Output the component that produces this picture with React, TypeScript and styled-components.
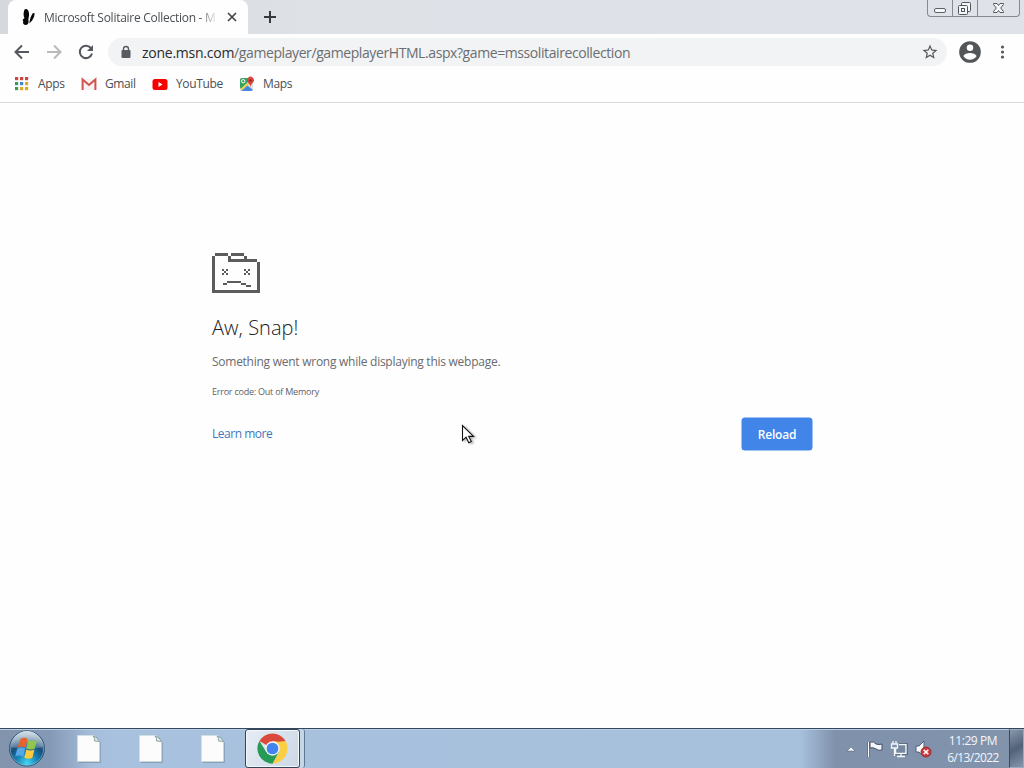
import type { ReactNode } from "react";
import styled, { createGlobalStyle } from "styled-components";

const GlobalStyle = createGlobalStyle`
  * {
    box-sizing: border-box;
  }
  body {
    margin: 0;
    overflow: hidden;
    font-family: "Open Sans", "Noto Sans", sans-serif;
  }
  svg {
    display: block;
    flex-shrink: 0;
  }
`;

const Desktop = styled.div`
  position: relative;
  display: flex;
  flex-direction: column;
  width: 1024px;
  height: 768px;
  background: #fefefe;
`;

const Label = styled.span<{ $size?: number; $spacing?: number; $color?: string }>`
  font-size: ${(props) => props.$size ?? 12}px;
  letter-spacing: ${(props) => props.$spacing ?? 0}px;
  color: ${(props) => props.$color ?? "#4b4f53"};
  white-space: nowrap;
`;

/* Tab strip */

const TabStrip = styled.div`
  display: flex;
  height: 34px;
  padding-left: 8px;
  background: linear-gradient(90deg, #d5d8dc, #dee1e6 30%, #dfe2e9);
`;

const Tab = styled.div`
  display: flex;
  align-items: center;
  width: 240px;
  padding: 0 10px 0 13px;
  background: #fefefe;
  border-radius: 8px 8px 0 0;
`;

const TabTitle = styled.div`
  width: 175px;
  margin-left: 8px;
  line-height: 20px;
  mask-image: linear-gradient(90deg, #000 155px, transparent 174px);
`;

const CloseTab = styled.div`
  margin-left: 8px;
`;

const NewTab = styled.div`
  display: flex;
  align-items: center;
  margin-left: 15px;
`;

const WindowButtons = styled.div`
  display: flex;
  width: 93px;
  height: 17px;
  margin: 0 4px 0 auto;
  border: 1px solid #858990;
  border-top: 0;
  border-radius: 0 0 4px 4px;
  background: #dfe2e8;
`;

const WindowButton = styled.div<{ $width: number }>`
  display: flex;
  justify-content: center;
  width: ${(props) => props.$width}px;
  & + & {
    border-left: 1px solid #858990;
  }
`;

/* Toolbar */

const Toolbar = styled.div`
  display: flex;
  align-items: center;
  height: 36px;
  padding-left: 14px;
`;

const NavButtons = styled.div`
  display: flex;
  gap: 16px;
  width: 94px;
`;

const AddressBar = styled.div`
  display: flex;
  align-items: center;
  width: 839px;
  height: 28px;
  padding: 0 8px 0 12px;
  border-radius: 14px;
  background: #f1f3f4;
`;

const Url = styled.div`
  flex: 1;
  margin-left: 10px;
  line-height: 20px;
`;

const ToolbarEnd = styled.div`
  display: flex;
  align-items: center;
  gap: 13px;
  margin-left: 10px;
`;

const Bookmarks = styled.div`
  display: flex;
  height: 33px;
  padding: 0 0 4px 13px;
  border-bottom: 1px solid #d9dadb;
`;

const Bookmark = styled.div<{ $width: number }>`
  display: flex;
  align-items: center;
  gap: 8px;
  width: ${(props) => props.$width}px;
  ${Label} {
    padding-bottom: 1px;
  }
`;

/* Crash page */

const Page = styled.main`
  flex: 1;
  padding: 150px 212px 0;
`;

const Heading = styled.h1`
  margin: 21px 0 0;
  font-size: 20px;
  line-height: 28px;
  font-weight: 300;
  letter-spacing: 0.05px;
  color: #202124;
`;

const Message = styled.p<{ $top: number }>`
  display: flex;
  align-items: center;
  height: 20px;
  margin: ${(props) => props.$top}px 0 0;
`;

const Actions = styled.div`
  display: flex;
  align-items: center;
  justify-content: space-between;
  width: 600px;
  height: 32px;
  margin-top: 17px;
  ${Label} {
    padding-bottom: 1px;
  }
`;

const ReloadButton = styled.button`
  width: 70px;
  height: 32px;
  padding: 0;
  border: 0;
  border-radius: 3px;
  background: #4285e8;
  box-shadow: 0 0 0 0.5px #4285e8;
  color: #fff;
  font-family: inherit;
  font-size: 12px;
  font-weight: 600;
  letter-spacing: -0.2px;
`;

const Cursor = styled.svg`
  position: absolute;
  left: 461px;
  top: 424px;
  filter: drop-shadow(2px 1px 1px rgba(0, 0, 0, 0.3));
`;

/* Taskbar */

const Taskbar = styled.footer`
  display: flex;
  height: 40px;
  border-top: 1px solid #33485f;
  box-shadow: inset 0 1px #bdd1e6;
  background: linear-gradient(
    90deg,
    #8293ac 0,
    #8499b5 50px,
    #a5bedb 92px,
    #a7c1de 110px,
    #a7c1dd 800px,
    #8091ab 835px,
    #8194ac 1024px
  );
`;

const StartButton = styled.div`
  width: 58px;
  padding: 1px 0 0 8px;
`;

const TaskItem = styled.div`
  display: flex;
  justify-content: center;
  align-items: center;
  width: 62px;
`;

const ActiveTask = styled.div`
  display: flex;
  justify-content: center;
  align-items: center;
  width: 55px;
  height: 39px;
  margin-left: 1px;
  padding-right: 1px;
  border: 1px solid #32435a;
  border-radius: 3px;
  box-shadow: inset 0 0 0 1px #f4f8fb;
  background: linear-gradient(120deg, #e6edf4, #cbd8e6);
`;

const TaskEdge = styled.div`
  width: 5px;
  height: 39px;
  border-right: 1px solid #607995;
  border-radius: 0 3px 3px 0;
  background: #c5d6e7;
`;

const Tray = styled.div`
  display: flex;
  align-items: center;
  margin-left: auto;
`;

const Clock = styled.div`
  display: flex;
  flex-direction: column;
  align-items: center;
  width: 72px;
  margin-left: 1px;
  line-height: 17px;
`;

const ShowDesktop = styled.div`
  width: 15px;
  height: 39px;
  border: 1px solid #9caabd;
  border-left: 1px solid #394c62;
  background: linear-gradient(150deg, #8997a9, #526279 50%, #8597ae);
`;

const WindowsOrb = () => (
  <svg width="38" height="38" viewBox="0 0 38 38">
    <defs>
      <radialGradient id="orb" cx="50%" cy="92%" r="80%">
        <stop offset="0" stopColor="#45d7f2" />
        <stop offset=".38" stopColor="#1683b6" />
        <stop offset=".68" stopColor="#174f7b" />
        <stop offset="1" stopColor="#7890a8" />
      </radialGradient>
      <linearGradient id="shine" x2="0" y2="1">
        <stop offset="0" stopColor="#eef5fa" stopOpacity=".8" />
        <stop offset="1" stopColor="#b5cada" stopOpacity=".25" />
      </linearGradient>
    </defs>
    <circle cx="19" cy="18.5" r="17.5" fill="url(#orb)" stroke="#2b5272" />
    <circle cx="19" cy="18.5" r="16.7" fill="none" stroke="#a8cbe0" strokeOpacity=".6" strokeWidth=".8" />
    <path d="M3 17a16 16 0 0 1 32 0Q19 21 3 17Z" fill="url(#shine)" />
    <path d="M12.500 9q4-2.500 7 0l-2 8.500q-4-2.200-8 0z" fill="#e8622d" />
    <path d="M20.500 10q4 2 8.500 0l-2.200 8.500q-4 2-8.300 0z" fill="#8fc64b" />
    <path d="M9.200 18.700q4-2.200 8 0l-2 7.800q-4-2-8 .2z" fill="#54a7e8" />
    <path d="M18.300 19.500q4 2 8.200 0l-2.200 8.500q-4 1.800-8-.3z" fill="#fcca3c" />
  </svg>
);

const BlankFile = () => (
  <svg width="26" height="30" viewBox="0 0 26 30">
    <path d="M2 2h17l5 6v20H2z" fill="#66798d" opacity=".6" transform="translate(.7 .7)" />
    <path d="M1.500 1.500H18l5.500 6v20h-22z" fill="#fbfcfb" stroke="#d6dedf" strokeWidth=".6" />
    <path d="M17 2q2 2 1.500 5l5 .5Q22 3 17 2Z" fill="#dce8e6" stroke="#75958f" strokeWidth=".8" />
  </svg>
);

const ChromeLogo = () => (
  <svg width="33" height="33" viewBox="0 0 48 48">
    <path d="M24 24 4.950 13A22 22 0 0 1 43.050 13Z" fill="#d94a3d" />
    <path d="M43.050 13A22 22 0 0 1 24 46L33 29 24 13Z" fill="#fbcf45" />
    <path d="M24 46A22 22 0 0 1 4.950 13L15 29 33 29Z" fill="#279b55" />
    <path d="M24 13H43.050L33 14Z" fill="#d94a3d" />
    <circle cx="24" cy="24" r="10.500" fill="#f5f7f7" />
    <circle cx="24" cy="24" r="8.500" fill="#4484ee" />
  </svg>
);

const SadFolder = () => (
  <svg width="48" height="40" viewBox="0 0 48 40" fill="#5c5c5f" shapeRendering="crispEdges">
    <path d="M3 0h13v3H3zM0 3h3v34h45v3H0zM16 3h3v3h-3zM19 0h13v3H19zM32 3h3v3h-3zM16 6h29v3H16zM45 9h3v29h-3z" />
    <path d="M10 16h2v2h-2zM14 16h2v2h-2zM12 18h2v2h-2zM10 20h2v2h-2zM14 20h2v2h-2z" />
    <path d="M32 16h2v2h-2zM36 16h2v2h-2zM34 18h2v2h-2zM32 20h2v2h-2zM36 20h2v2h-2z" />
    <path d="M15 28h14v2H15zM11 30h4v2h-4zM29 30h5v2h-5zM34 32h5v2h-5z" />
  </svg>
);

const appColors = ["#cf4641", "#cf4641", "#cf4641", "#3b9a59", "#4285d4", "#e1a72b", "#3b9a59", "#e1a72b", "#e1a72b"];

const AppsIcon = () => (
  <svg width="17" height="16">
    {appColors.map((color, index) => (
      <rect key={index} x={2 + (index % 3) * 5} y={1 + Math.floor(index / 3) * 5} width="3.200" height="3.200" fill={color} />
    ))}
  </svg>
);

const GmailIcon = () => (
  <svg width="16" height="16">
    <path d="M1 3h14v11H1z" fill="#f7f3f2" />
    <path d="M1.600 14V3.500L8 9l6.400-5.500V14" fill="none" stroke="#d2534d" strokeWidth="2" />
  </svg>
);

const YouTubeIcon = () => (
  <svg width="16" height="16">
    <rect x=".5" y="3" width="15" height="11" rx="2.500" fill="#f70000" />
    <path d="M6.500 6v5l4-2.500z" fill="#fff" />
  </svg>
);

const MapsIcon = () => (
  <svg width="16" height="16" viewBox="0 0 16 16">
    <path d="M3 2h7l4 5v6q0 2-2 2H3q-2 0-2-2V4q0-2 2-2Z" fill="#dce3e5" />
    <path d="M3 2h7v3L2 13q-1-1-1-2V4q0-2 2-2Z" fill="#36a35d" />
    <path d="m8 9 6 5q-1 1-2 1H2z" fill="#4787de" />
    <path d="M2 14 12 5" stroke="#f2cc51" strokeWidth="2" />
    <circle cx="4.200" cy="5.200" r="1.700" fill="none" stroke="#fff" />
    <path d="M11.500 11Q11 8.500 9 6.500A3.400 3.400 0 1 1 14 6.500Q12 8.500 11.500 11Z" fill="#da473f" />
    <circle cx="11.500" cy="4.500" r="1.200" fill="#8e2520" />
  </svg>
);

const NavIcon = ({ children, color = "#55585c" }: { children: ReactNode; color?: string }) => (
  <svg width="16" height="16" viewBox="0 0 16 16" fill="none" stroke={color} strokeWidth="2">
    {children}
  </svg>
);

const bookmarks = [
  { name: "Apps", width: 68, icon: <AppsIcon />, spacing: -0.3 },
  { name: "Gmail", width: 71, icon: <GmailIcon />, spacing: -0.4 },
  { name: "YouTube", width: 87, icon: <YouTubeIcon />, spacing: -0.35 },
  { name: "Maps", width: 70, icon: <MapsIcon />, spacing: -0.35 },
];

export default function App() {
  return (
    <Desktop>
      <GlobalStyle />
      <TabStrip>
        <Tab>
          <svg width="15" height="18" viewBox="0 0 15 18">
            <path d="M3.500 1.500c3-2 5 2 4.500 6.500l-.7 3.500c1 3-.5 5.500-2.500 5.500-2.300 0-3.300-2-2.500-3.500-1-1-.8-2 1.200-3.500C2 7.500 2.500 4.500 3.500 1.500Z" fill="#080808" />
            <path d="M8.300 15.500Q9 9 11.800 5.300q1.800-1 1.800.7 0 3-2.500 6.500z" fill="#080808" />
          </svg>
          <TabTitle>
            <Label $spacing={-0.27}>Microsoft Solitaire Collection - M</Label>
          </TabTitle>
          <CloseTab>
            <svg width="10" height="10" stroke="#424549" strokeWidth="1.700">
              <path d="m1 1 8 8M9 1 1 9" />
            </svg>
          </CloseTab>
        </Tab>
        <NewTab>
          <svg width="14" height="14" stroke="#36393e" strokeWidth="2">
            <path d="M7 1v12M1 7h12" />
          </svg>
        </NewTab>
        <WindowButtons>
          <WindowButton $width={24}>
            <svg width="14" height="16" fill="#f6f7f8" stroke="#5d6066">
              <rect x="1.500" y="8.500" width="11" height="4" rx="1.500" />
            </svg>
          </WindowButton>
          <WindowButton $width={25}>
            <svg width="16" height="16" fill="#f6f7f8" stroke="#51545a">
              <rect x="4.500" y="2.500" width="9" height="9" rx="1" />
              <rect x="1.500" y="5.500" width="9" height="9" rx="1" />
              <rect x="4.500" y="8.500" width="3" height="3" />
            </svg>
          </WindowButton>
          <WindowButton $width={41}>
            <svg width="13" height="16" fill="#f3f5f7" stroke="#55585f">
              <path d="M1.500 3.500H5L6.500 5.500 8 3.500h3.500v1L8.700 8l2.800 3.500v1H8l-1.500-2-1.500 2H1.500v-1L4.300 8 1.500 4.500z" />
            </svg>
          </WindowButton>
        </WindowButtons>
      </TabStrip>
      <Toolbar>
        <NavButtons>
          <NavIcon>
            <path d="M15 8H2M8 1.500 1.500 8 8 14.500" />
          </NavIcon>
          <NavIcon color="#b8babc">
            <path d="M1 8h13M8 1.500 14.500 8 8 14.500" />
          </NavIcon>
          <NavIcon>
            <path d="M13.200 4.500A6.200 6.200 0 1 0 14 9.500" />
            <path d="M15 1v6H9z" fill="#55585c" stroke="none" />
          </NavIcon>
        </NavButtons>
        <AddressBar>
          <svg width="12" height="14">
            <path d="M3.500 6V4a2.500 2.500 0 0 1 5 0v2" fill="none" stroke="#585b5f" strokeWidth="1.400" />
            <rect x="1.500" y="5" width="9" height="8" rx="1" fill="#585b5f" />
          </svg>
          <Url>
            <Label $size={14} $spacing={-0.25} $color="#292b2e">zone.msn.com</Label>
            <Label $size={14} $spacing={-0.41} $color="#6b6e72">
              /gameplayer/gameplayerHTML.aspx?game=mssolitairecollection
            </Label>
          </Url>
          <svg width="18" height="18" viewBox="0 0 24 24" fill="#54575b">
            <path d="m22 9.240-7.190-.62L12 2 9.190 8.630 2 9.240l5.460 4.730L5.820 21 12 17.270 18.180 21l-1.630-7.030L22 9.240ZM12 15.400l-3.760 2.270 1-4.280-3.320-2.880 4.380-.38L12 6.100l1.710 4.040 4.380.38-3.320 2.880 1 4.280L12 15.400Z" />
          </svg>
        </AddressBar>
        <ToolbarEnd>
          <svg width="26" height="26" viewBox="0 0 24 24" fill="#535659">
            <path d="M12 2a10 10 0 1 0 0 20 10 10 0 0 0 0-20Zm0 3a3 3 0 1 1 0 6 3 3 0 0 1 0-6Zm0 14.200A7.200 7.200 0 0 1 6 16c0-2 4-3.100 6-3.100S18 14 18 16a7.200 7.200 0 0 1-6 3.200Z" />
          </svg>
          <svg width="14" height="16" fill="#54575b">
            <circle cx="6.500" cy="3" r="1.600" />
            <circle cx="6.500" cy="8" r="1.600" />
            <circle cx="6.500" cy="13" r="1.600" />
          </svg>
        </ToolbarEnd>
      </Toolbar>
      <Bookmarks>
        {bookmarks.map((item) => (
          <Bookmark key={item.name} $width={item.width}>
            {item.icon}
            <Label $spacing={item.spacing}>{item.name}</Label>
          </Bookmark>
        ))}
      </Bookmarks>
      <Page>
        <SadFolder />
        <Heading>Aw, Snap!</Heading>
        <Message $top={9}>
          <Label $spacing={-0.26} $color="#696b6e">Something went wrong while displaying this webpage.</Label>
        </Message>
        <Message $top={10}>
          <Label $size={9} $spacing={-0.23} $color="#5f6164">Error code: Out of Memory</Label>
        </Message>
        <Actions>
          <Label $spacing={-0.48} $color="#3f78bd">Learn more</Label>
          <ReloadButton>Reload</ReloadButton>
        </Actions>
      </Page>
      <Taskbar>
        <StartButton>
          <WindowsOrb />
        </StartButton>
        <TaskItem><BlankFile /></TaskItem>
        <TaskItem><BlankFile /></TaskItem>
        <TaskItem><BlankFile /></TaskItem>
        <ActiveTask>
          <ChromeLogo />
        </ActiveTask>
        <TaskEdge />
        <Tray>
          <svg width="94" height="24" viewBox="0 0 94 24">
            <path d="m5 14 4-4 4 4z" fill="#f5f7fa" stroke="#53647a" strokeWidth=".5" />
            <path d="M26.500 5v15" stroke="#35465a" strokeWidth="3" />
            <path d="M26.500 5v15" stroke="#fff" strokeWidth="1.500" />
            <path d="M28 5q4-1 6 2 3 1 6 0v6q-4 1-6-1-3-2-6-1z" fill="#f5f7fa" stroke="#405169" />
            <path d="M57 7.500h7v9H53.500v-5" fill="#76879f" stroke="#34465b" strokeWidth="3" />
            <path d="M57 7.500h7v9H53.500v-5" fill="#76879f" stroke="#f3f6fa" strokeWidth="1.500" />
            <path d="M59 17v2.500m-4 0h8M51 4v3m3-3v3m-4.500 0h6v4h-6zM52.500 11v8" fill="none" stroke="#f3f6fa" strokeWidth="1.300" />
            <path d="M74 9h3l5-5v16l-5-5h-3z" fill="#f8fafb" stroke="#536277" />
            <circle cx="84" cy="15" r="5" fill="#c93638" stroke="#9f3037" />
            <path d="m81.700 12.700 4.600 4.600m0-4.600-4.600 4.600" stroke="#fff" strokeWidth="1.600" />
          </svg>
          <Clock>
            <Label $spacing={-0.4} $color="#f2f6fb">11:29 PM</Label>
            <Label $spacing={-0.6} $color="#f2f6fb">6/13/2022</Label>
          </Clock>
          <ShowDesktop />
        </Tray>
      </Taskbar>
      <Cursor width="16" height="22" viewBox="0 0 16 22">
        <path d="M1.500 1.500v15l3.600-3.300 2.700 5.600 2.500-1.200-2.600-5.200h4.800z" fill="#fff" stroke="#111" strokeWidth="1.100" />
      </Cursor>
    </Desktop>
  );
}
